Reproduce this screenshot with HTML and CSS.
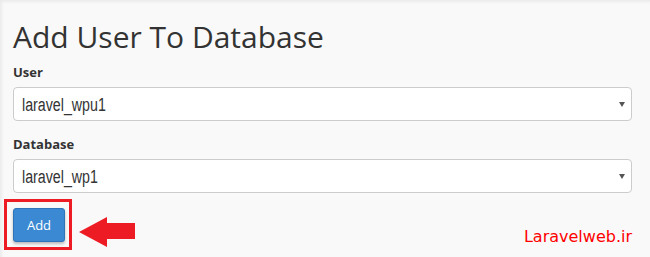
FILE: index.html
```html
<!DOCTYPE html>
<html>
<head>
<meta charset="utf-8">
<link rel="stylesheet" href="styles.css">
</head>
<body>
<div class="page">
  <h1 class="title">Add User To Database</h1>
  <div class="field">
    <label class="label">User</label>
    <div class="select"><span class="value">laravel_wpu1</span><span class="caret"></span></div>
  </div>
  <div class="field">
    <label class="label">Database</label>
    <div class="select"><span class="value">laravel_wp1</span><span class="caret"></span></div>
  </div>
  <div class="actions">
    <div class="highlight"><button class="btn">Add</button></div>
    <svg class="arrow" width="56" height="30" viewBox="0 0 56 30"><polygon points="0,15 28,0 28,6 56,6 56,22 28,22 28,30" fill="#ed1c24"/></svg>
    <span class="brand">Laravelweb.ir</span>
  </div>
</div>
</body>
</html>
```
FILE: styles.css
```css
html, body {
  margin: 0;
  padding: 0;
}
body {
  width: 650px;
  height: 257px;
  background: #f9f9f9;
  box-shadow: inset 2px 2px 3px rgba(0,0,0,0.06);
  overflow: hidden;
  font-family: "Open Sans", sans-serif;
  color: #333;
}
.page {
  padding: 19px 18px 0 13px;
}
.title {
  margin: 0 0 8px 0;
  font-size: 30px;
  line-height: 36px;
  font-weight: 400;
  color: #333;
}
.field {
  margin-bottom: 14px;
}
.label {
  display: block;
  font-size: 13px;
  line-height: 18px;
  font-weight: 700;
  color: #333;
  margin-bottom: 6px;
}
.select {
  position: relative;
  height: 34px;
  box-sizing: border-box;
  border: 1px solid #ccc;
  border-radius: 4px;
  background: #fff;
  padding-left: 8px;
  display: flex;
  align-items: center;
}
.value {
  display: inline-block;
  font-family: "Liberation Sans", Arial, sans-serif;
  font-size: 18px;
  color: #333;
  transform: scaleX(0.79);
  transform-origin: left center;
  line-height: 20px;
  margin-top: 1px;
}
.caret {
  position: absolute;
  right: 6px;
  top: 14px;
  width: 0;
  height: 0;
  border-left: 3px solid transparent;
  border-right: 3px solid transparent;
  border-top: 5px solid #555;
}
.actions {
  display: flex;
  align-items: flex-start;
  margin-top: -8px;
}
.highlight {
  margin-left: -9px;
  padding: 6px 4px 5px 6px;
  border: 3px solid #ed1c24;
}
.btn {
  display: block;
  width: 52px;
  height: 34px;
  margin: 0;
  padding: 0;
  border: 1px solid #2f74b8;
  border-radius: 3px;
  background: #3a89d2;
  color: #fff;
  font-family: "Open Sans", sans-serif;
  font-size: 13px;
  box-shadow: 0 2px 3px rgba(0,0,0,0.25);
}
.arrow {
  display: block;
  margin-left: 7px;
  margin-top: 18px;
}
.brand {
  margin-left: auto;
  margin-top: 28px;
  font-family: "DejaVu Sans", sans-serif;
  font-size: 16px;
  line-height: 20px;
  color: #ff0000;
}
```
